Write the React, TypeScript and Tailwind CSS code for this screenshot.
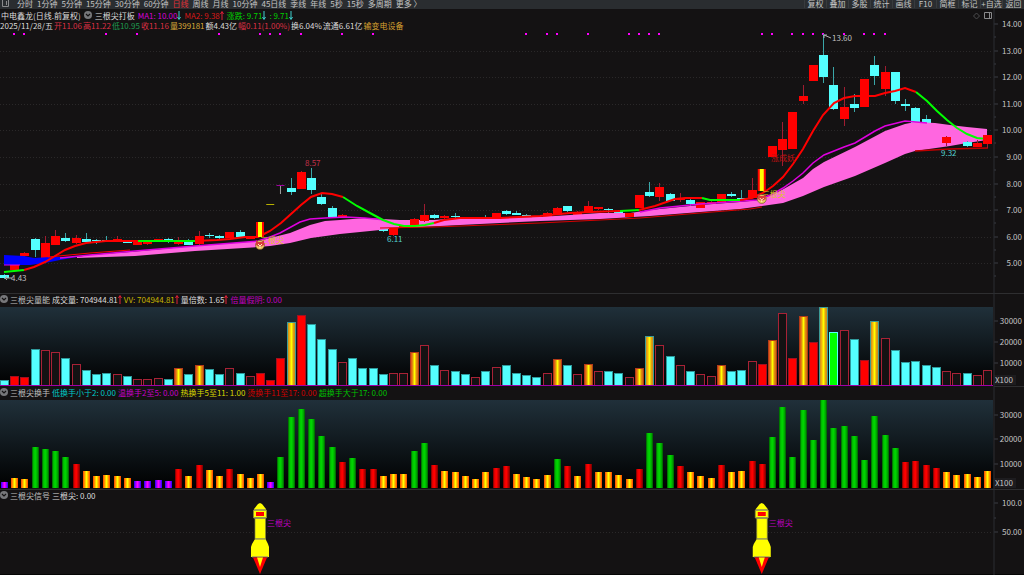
import type { ReactNode } from "react";
import clsx from "clsx";

const STEP = 10.24;
const PLOT_RIGHT = 993;
const cx = (i: number) => 4 + i * STEP;

const PERIODS = [
  "分时", "1分钟", "5分钟", "15分钟", "30分钟", "60分钟", "日线", "周线", "月线",
  "10分钟", "45日线", "季线", "年线", "5秒", "15秒", "多周期", "更多 〉",
];
const TOOLS = ["复权", "叠加", "多股", "统计", "画线", "F10", "简框", "标记", "+自选", "返回"];

// [index, kind, high, body top, body bottom, low]
type Candle = [number, "r" | "c", number, number, number, number];
const CANDLES: Candle[] = [
  [0, "c", 274, 275, 278, 279], [1, "r", 265, 265, 270, 270], [2, "r", 252, 253, 256, 257],
  [3, "c", 238, 239, 250, 257], [4, "r", 236, 243, 259, 259], [5, "r", 230, 236, 245, 245],
  [6, "c", 233, 238, 241, 242], [7, "r", 235, 238, 243, 244], [8, "c", 233, 239, 242, 242],
  [9, "c", 239, 240, 241, 244], [10, "c", 236, 240, 241, 241], [11, "r", 236, 239, 241, 241],
  [12, "c", 240, 241, 243, 243], [13, "r", 240, 241, 245, 245], [14, "r", 241, 242, 244, 245],
  [15, "r", 239, 239, 241, 242], [16, "c", 238, 239, 241, 243], [17, "r", 237, 240, 244, 245],
  [18, "c", 239, 241, 245, 245], [19, "r", 231, 236, 244, 245], [20, "c", 233, 235, 236, 238],
  [21, "c", 235, 236, 238, 239], [22, "r", 232, 232, 238, 238], [23, "c", 230, 232, 237, 237],
  [24, "r", 236, 236, 239, 239], [28, "c", 178, 188, 192, 195], [29, "r", 171, 172, 189, 189],
  [30, "c", 168, 178, 190, 194], [31, "c", 194, 197, 204, 205], [32, "c", 206, 208, 217, 217],
  [33, "r", 214, 215, 218, 218], [36, "c", 228, 228, 230, 230], [37, "c", 229, 229, 231, 232],
  [38, "r", 228, 228, 235, 236], [39, "r", 225, 225, 228, 228], [40, "r", 218, 219, 225, 226],
  [41, "r", 204, 215, 221, 222], [42, "c", 214, 215, 218, 219], [43, "r", 215, 216, 218, 219],
  [44, "c", 213, 216, 217, 219], [45, "c", 217, 217, 218, 218], [46, "r", 218, 218, 220, 220],
  [47, "c", 215, 217, 218, 218], [48, "r", 213, 213, 219, 219], [49, "c", 210, 211, 214, 215],
  [50, "c", 211, 213, 215, 215], [51, "c", 214, 215, 216, 217], [52, "c", 216, 217, 218, 218],
  [53, "r", 212, 213, 217, 217], [54, "r", 207, 208, 215, 215], [55, "c", 206, 206, 211, 212],
  [56, "r", 211, 212, 215, 215], [57, "r", 201, 206, 213, 213], [58, "r", 207, 207, 209, 210],
  [59, "c", 208, 209, 210, 213], [60, "c", 210, 211, 213, 213], [61, "r", 213, 213, 217, 217],
  [62, "r", 195, 195, 208, 208], [63, "c", 182, 192, 196, 197], [64, "r", 183, 187, 197, 201],
  [65, "c", 193, 194, 201, 201], [66, "r", 193, 198, 200, 202], [67, "c", 199, 200, 204, 206],
  [68, "r", 202, 202, 208, 208], [69, "r", 201, 202, 204, 204], [70, "r", 194, 194, 203, 203],
  [71, "c", 192, 194, 196, 197], [72, "c", 190, 198, 199, 199], [73, "r", 178, 190, 198, 198],
  [75, "r", 146, 146, 157, 157], [76, "r", 122, 139, 150, 166], [77, "r", 112, 112, 149, 149],
  [78, "r", 85, 96, 101, 104], [79, "r", 65, 65, 81, 81], [80, "c", 34, 55, 77, 83],
  [81, "c", 67, 85, 109, 110], [82, "r", 87, 107, 119, 126], [83, "c", 94, 104, 108, 112],
  [84, "r", 79, 79, 107, 107], [85, "c", 56, 65, 76, 85], [86, "r", 66, 72, 89, 96],
  [87, "c", 72, 72, 101, 104], [88, "c", 99, 104, 106, 111], [89, "c", 107, 108, 123, 123],
  [90, "c", 115, 119, 123, 123], [92, "r", 136, 137, 143, 146], [94, "c", 141, 142, 146, 147],
  [95, "r", 140, 143, 147, 147], [96, "r", 135, 135, 144, 148],
];
// candles that stay readable inside the band
const OVER_BAND = [18, 38, 39, 40, 41, 61, 68, 92, 94, 95, 96];

const DOTS = [
  1, 2, 10, 13, 21, 25, 26, 27, 29, 33, 36, 51, 53, 54, 57, 61, 62, 63, 64, 74, 75, 77, 78,
  79, 80, 82, 84, 85, 86,
];

const FAST_LINE = [
  ["#00ff00", "4,272 24,270"],
  ["#ff0000", "24,270 34,267 45,262 55,256 65,250 75,246 86,243 96,242 106,241 138,241"],
  ["#00ff00", "138,241 195,241"],
  ["#ff0000", "195,241 217,240 230,239 245,237 258,237 262,235 270,231 281,223 291,214 301,205 311,197 322,193 332,194 343,197"],
  ["#00ff00", "343,197 357,206 370,213 383,220 394,224 404,226 415,226 425,225 434,223"],
  ["#ff0000", "434,223 444,220 460,218 500,218 540,216 570,213 590,212 620,211"],
  ["#00ff00", "620,211 639,210"],
  ["#ff0000", "639,210 655,206 675,199 685,198 702,198"],
  ["#00ff00", "702,198 710,200 740,200"],
  ["#ff0000", "740,200 752,198 763,193 773,186 783,177 793,164 803,149 813,131 823,115 834,103 844,98 855,96 875,96 885,93 895,91 905,88 916,92"],
  ["#00ff00", "916,92 927,101 937,111 947,120 957,128 967,134 977,138 987,139"],
];

const BAND =
  "77,257 90,255 130,252 195,246 258,241 270,238 290,233 310,225 325,221 340,220 365,218 400,220 434,220 460,218 540,217 600,213 630,213 650,210 680,207 700,205 740,202 760,200 780,191 803,178 813,169 824,162 855,147 885,131 905,124 915,122 935,123 950,125 967,127 987,129 " +
  "987,140 967,143 950,146 915,151 905,154 885,163 855,176 824,187 803,196 783,203 762,206 740,209 700,212 650,216 600,219 540,221 440,226 400,228 370,231 340,234 311,238 290,243 270,246 258,247 195,251 135,256 77,258";

// daily volume, 24.4 per 10000 lots
const VOLUME = [
  6, 10, 9, 41, 39, 37, 31, 24, 17, 12, 13, 12, 10, 7, 7, 8, 7, 19, 12, 23, 18, 12, 19, 14,
  10, 14, 6, 31, 71, 79, 69, 52, 41, 26, 30, 19, 19, 12, 14, 14, 37, 45, 23, 17, 16, 12, 9,
  16, 20, 22, 14, 11, 9, 13, 29, 22, 12, 24, 16, 16, 13, 9, 19, 55, 45, 33, 22, 16, 12, 10,
  23, 16, 17, 27, 24, 51, 81, 31, 78, 48, 88, 60, 62, 52, 28, 72, 53, 40, 26, 27, 23, 20, 16,
  13, 14, 11, 17,
];
// C falling, H rising, R strong rise, Y / T doubled volume, G shrinking
const VOLUME_KIND =
  "CRRCHHCHCC" + "CHCHHHCYCY" + "CCHCHRRRTR" + "CCCHCCCCHH" + "YHCHCCHCHC" +
  "CCCHYCHYHC" + "CHYTHCHCHH" + "YCCHRYHRYR" + "TGHCRTHCCC" + "CCHHCHH";

const VOLUME_FILL: Record<string, string> = {
  C: "#54ffff", H: "#141213", R: "#ff0000", Y: "url(#gold)", T: "url(#goldCyan)", G: "#00ff00",
};
const VOLUME_EDGE: Record<string, string> = {
  C: "#2f9a9c", H: "#a82236", R: "#a01020", Y: "#b33a18", T: "#3c9a96", G: "#54ffff",
};

function turnoverFill(v: number) {
  if (v >= 28) return "url(#green)";
  if (v >= 19) return "url(#red)";
  if (v >= 9) return "url(#orange)";
  return "url(#violet)";
}

function Bands({ id, stops }: { id: string; stops: string[] }) {
  return (
    <linearGradient id={id}>
      {stops.map((color, i) => (
        <stop key={i} offset={i / (stops.length - 1)} stopColor={color} />
      ))}
    </linearGradient>
  );
}

function Panel({ top, height, label, legend, children }: {
  top: number;
  height: number;
  label: string;
  legend: ReactNode;
  children: ReactNode;
}) {
  return (
    <section className="relative">
      <svg viewBox={`0 ${top} 1024 ${height}`} className="block h-auto w-full" role="img" aria-label={label}>
        {children}
        <path d={`M994 ${top}V${top + height}`} stroke="#2b2d33" />
      </svg>
      <div className="absolute top-0 left-0 whitespace-nowrap">{legend}</div>
    </section>
  );
}

function AxisLabel({ y, text }: { y: number; text: string }) {
  return (
    <>
      <path d={`M994 ${y}h4`} stroke="#3b3d44" />
      <text x="1022" y={y + 3} fontSize="8" textAnchor="end" fill="#c4c4c4">{text}</text>
    </>
  );
}

function UnitLabel({ y }: { y: number }) {
  return (
    <>
      <rect x="994" y={y - 5} width="22" height="10" fill="#1d1c1f" />
      <text x="995" y={y + 3} fontSize="8" fill="#c4c4c4">X100</text>
    </>
  );
}

function Toggle() {
  return (
    <button aria-label="指标菜单" className="flex">
      <svg viewBox="0 0 8 8" className="size-2">
        <circle cx="4" cy="4" r="4" fill="#77777a" />
        <path d="M2 3l2 2 2-2" fill="none" stroke="#141213" strokeWidth="1.2" />
      </svg>
    </button>
  );
}

function Arrow({ down }: { down?: boolean }) {
  return (
    <svg viewBox="0 0 4 9" className={clsx("h-[9px] w-1", down ? "text-[#3fd0d0]" : "text-[#e02038]")}>
      <path
        d={down ? "M2 0V8M.5 6L2 8.5 3.5 6" : "M2 9V1M.5 3L2 .5 3.5 3"}
        fill="none"
        stroke="currentColor"
      />
    </svg>
  );
}

function Rocket({ i }: { i: number }) {
  return (
    <g transform={`translate(${cx(i)} 503)`}>
      <path d="M0 0L2 1 6 6V7H-6V6L-2 1Z" fill="#ffff00" />
      <path d="M-6.5 7H6.5V15H-6.5Z M-5 15H5.5V36H-5Z" fill="#ffff00" stroke="#8b8a3a" strokeWidth=".7" />
      <path d="M-5 36H5.5L8 41 9 44V54H-9V44L-8 41Z" fill="#ffff00" />
      <path d="M-4 9H4V13H-4Z" fill="#ff0000" />
      <path d="M-6 7H6M-6 15H6M-5 36H5.5M-8 54H8" stroke="#77777a" />
      <path d="M-7 54.500H7L0 71Z" fill="#ff0000" />
      <path d="M-3 54.500H3L0 64Z" fill="#ffff00" />
      <text x="7" y="23" fontSize="8" fill="#c000c0">三根尖</text>
    </g>
  );
}

function Signal({ i, top, bottom }: { i: number; top: number; bottom: number }) {
  const x = cx(i);
  const y = bottom + 8;
  return (
    <>
      <rect x={x - 4} y={top} width="8" height={bottom - top} fill="#ff0000" />
      <rect x={x - 2} y={top} width="4" height={bottom - top} fill="#ffff00" />
      <text x={x} y={y - 2} fontSize="8" fill="#d9c91c">三根尖</text>
      <circle cx={x} cy={y} r="4.500" fill="#e8c860" stroke="#6d4a1c" strokeWidth=".6" />
      <path d={`M${x - 4} ${y - 5}l2 2h4l2-2v5l-4 2-4-2z`} fill="#d83a3a" />
      <path d={`M${x - 2} ${y - 1}l2 2 2-2M${x} ${y + 1}v2`} stroke="#fff3c0" fill="none" />
    </>
  );
}

function CandleShape({ c: [i, kind, high, top, bottom, low] }: { c: Candle }) {
  const x = Math.round(cx(i));
  return (
    <>
      <path d={`M${x + 0.5} ${high}V${low}`} stroke={kind === "r" ? "#a01c30" : "#3aa6a8"} />
      <rect x={x - 4} y={top} width="9" height={bottom - top} fill={kind === "r" ? "#ff0000" : "#54ffff"} />
    </>
  );
}

function PricePanel() {
  return (
    <Panel
      top={9}
      height={284}
      label="日线"
      legend={
        <>
          <div className="flex h-3 items-center gap-[3px] pl-px">
            <h1>中电鑫龙(日线.前复权)</h1>
            <Toggle />
            <span>三根尖打板</span>
            <span className="flex text-[#d800d8]">MA1: 10.00<Arrow down /></span>
            <span className="flex text-[#d81818]">MA2: 9.38<Arrow /></span>
            <span className="flex text-[#00d000]">涨跌: 9.71<Arrow down /></span>
            <span className="flex text-[#00d000]">: 9.71<Arrow down /></span>
          </div>
          <div className="flex h-2 items-center gap-px">
            <span>2025/11/28/五</span>
            <span className="text-[#dc3044]">开11.06</span>
            <span className="text-[#dc3044]">高11.22</span>
            <span className="text-[#1f9a50]">低10.95</span>
            <span className="text-[#dc3044]">收11.16</span>
            <span className="text-[#d8a838]">量399181</span>
            <span>额4.43亿</span>
            <span className="text-[#dc3044]">幅0.11(1.00%)</span>
            <span>换6.04%</span>
            <span>流通6.61亿</span>
            <a href="#sector" className="text-[#d8a030]">输变电设备</a>
          </div>
        </>
      }
    >
      {[14, 13, 12, 11, 10, 9, 8, 7, 6, 5].map((price, i) => {
        const y = Math.round(24 + i * 26.6);
        return (
          <g key={price}>
            {i > 0 && <path d={`M0 ${y + 0.5}H${PLOT_RIGHT}`} stroke="#2a2829" strokeDasharray="1 2" />}
            <path d={`M994 ${y + 13}h2`} stroke="#3b3d44" />
            <AxisLabel y={y} text={price.toFixed(2)} />
          </g>
        );
      })}
      {DOTS.map((i) => (
        <rect key={i} x={Math.round(cx(i)) - 1} y="33" width="2" height="2" fill="#ff00ff" />
      ))}
      {CANDLES.map((c) => <CandleShape key={c[0]} c={c} />)}
      <polygon points="4,255 24,256 34,258 50,257 77,257 60,260 45,263 30,265 4,265" fill="#0000ff" />
      <polygon points={BAND} fill="#ff66e0" />
      {CANDLES.filter((c) => OVER_BAND.includes(c[0])).map((c) => <CandleShape key={c[0]} c={c} />)}
      <g fill="none">
        <polyline points="4,265 20,265" stroke="#e000e0" />
        <polyline points="48,257 90,253 130,250" stroke="#ff0000" />
        <polyline
          points="60,258 90,255 135,251 195,246 258,241 270,237 280,233 300,222 310,219 325,218 345,217 365,218 385,220"
          stroke="#e000e0"
          strokeWidth="1.500"
        />
        <polyline
          points="640,212 660,208 700,204 757,200 773,194 783,188 793,181 803,173 813,163 824,155 844,147 855,143 875,131 885,126 905,121 927,123"
          stroke="#e000e0"
          strokeWidth="1.500"
        />
        <polyline
          points="380,228 434,227 540,223 640,218 700,213 750,209 762,207"
          stroke="#d80000"
        />
        <polyline points="915,151 950,149 988,148" stroke="#c00000" strokeWidth="1.500" />
        {FAST_LINE.map(([color, points]) => (
          <polyline key={points} points={points} stroke={color} strokeWidth="2" />
        ))}
        <path d={`M${cx(26) - 4} 204.500h8`} stroke="#b8b000" />
        <path d={`M${cx(27)} 186v8`} stroke="#a0a0a0" />
        <path d={`M${cx(27) - 4} 185.500h8`} stroke="#a000a0" />
        <path d="M831 38l-7-3M824 38v-3h3M12 278H5M7 276l-2 2 2 2" stroke="#b0b0b0" />
      </g>
      <CandleShape c={CANDLES[CANDLES.length - 1]} />
      <Signal i={25} top={222} bottom={237} />
      <Signal i={74} top={169} bottom={191} />
      <g fontSize="8">
        <text x="305" y="166" fill="#c03048">8.57</text>
        <text x="387" y="242" fill="#54d0d0">6.11</text>
        <text x="941" y="156" fill="#54d0d0">9.32</text>
        <text x="832" y="41" fill="#c0c0c0">13.60</text>
        <text x="11" y="281" fill="#c0c0c0">4.43</text>
        <text x="771" y="161" fill="#c01010">涨成妖</text>
      </g>
      <path d="M976.500 13l3 3-3 3-3-3z" fill="none" stroke="#4c4c4e" />
      <path d="M984.500 12.500h7v6h-7z M989.500 13v5" fill="none" stroke="#8a8a8c" />
    </Panel>
  );
}

function VolumePanel() {
  return (
    <Panel
      top={293}
      height={94}
      label="三根尖量能"
      legend={
        <div className="flex h-3 items-center gap-[2px]">
          <Toggle />
          <h2 className="text-[#c0c0c0]">三根尖量能</h2>
          <span className="flex">成交量: 704944.81<Arrow /></span>
          <span className="flex text-[#c8b400]">VV: 704944.81<Arrow /></span>
          <span className="flex">量倍数: 1.65<Arrow /></span>
          <span className="text-[#c000c0]">倍量假阴: 0.00</span>
        </div>
      }
    >
      <path d="M0 293.500H1024" stroke="#2e2e30" />
      <rect y="307" width={PLOT_RIGHT} height="79" fill="url(#sky)" />
      {VOLUME.map((v, i) => {
        const h = Math.round((v * 78) / 88);
        const kind = VOLUME_KIND[i];
        return (
          <rect
            key={i}
            x={Math.round(cx(i)) - 3.5}
            y={385.5 - h}
            width="8"
            height={h}
            fill={VOLUME_FILL[kind]}
            stroke={VOLUME_EDGE[kind]}
          />
        );
      })}
      <path d={`M0 385.500H${PLOT_RIGHT}`} stroke="#a000a8" />
      <path d="M994 386.500H1024" stroke="#2e2e30" />
      <AxisLabel y={321} text="30000" />
      <AxisLabel y={342} text="20000" />
      <AxisLabel y={363} text="10000" />
      <UnitLabel y={380} />
    </Panel>
  );
}

function TurnoverPanel() {
  return (
    <Panel
      top={387}
      height={102}
      label="三根尖换手"
      legend={
        <div className="flex h-[10px] items-center gap-[2px]">
          <Toggle />
          <h2 className="text-[#c0c0c0]">三根尖换手</h2>
          <span className="text-[#00c8c8]">低换手小于2: 0.00</span>
          <span className="text-[#c800c8]">温换手2至5: 0.00</span>
          <span className="text-[#d8d800]">热换手5至11: 1.00</span>
          <span className="text-[#d00000]">烫换手11至17: 0.00</span>
          <span className="text-[#00c000]">超换手大于17: 0.00</span>
        </div>
      }
    >
      <rect y="400" width={PLOT_RIGHT} height="88" fill="url(#sky)" />
      {VOLUME.map((v, i) => (
        <rect key={i} x={Math.round(cx(i)) - 3} y={488 - v} width="7" height={v} fill={turnoverFill(v)} />
      ))}
      <AxisLabel y={415} text="30000" />
      <AxisLabel y={439} text="20000" />
      <AxisLabel y={464} text="10000" />
      <UnitLabel y={483} />
    </Panel>
  );
}

function SignalPanel() {
  return (
    <Panel
      top={489}
      height={86}
      label="三根尖信号"
      legend={
        <div className="flex h-3 items-center gap-[2px]">
          <Toggle />
          <h2 className="text-[#c0c0c0]">三根尖信号</h2>
          <span>三根尖: 0.00</span>
        </div>
      }
    >
      <path d="M0 489.500H1024" stroke="#2e2e30" />
      <path d={`M0 532.500H${PLOT_RIGHT}`} stroke="#2a2829" strokeDasharray="1 2" />
      <path d="M0 574.500H1024" stroke="#050505" />
      <Rocket i={25} />
      <Rocket i={74} />
      <AxisLabel y={503} text="100.0" />
      <path d="M994 518h2" stroke="#3b3d44" />
      <AxisLabel y={532} text="50.00" />
    </Panel>
  );
}

export default function App() {
  return (
    <main className="min-h-screen bg-[#141213] font-['Noto_Sans_CJK_SC',sans-serif] text-[8px] leading-[9px] text-[#dcdcdc]">
      <svg className="absolute size-0" aria-hidden="true">
        <defs>
          <linearGradient id="sky" x2="0" y2="1">
            <stop offset="0" stopColor="#20303a" />
            <stop offset="1" stopColor="#000000" />
          </linearGradient>
          <Bands id="gold" stops={["#e03020", "#e08a10", "#ffff00", "#e08a10", "#c06010"]} />
          <Bands id="goldCyan" stops={["#c08020", "#f0b010", "#ffff00", "#e0a010", "#c08020"]} />
          <Bands id="green" stops={["#005a00", "#00c800", "#00d400", "#00b000", "#005a00"]} />
          <Bands id="red" stops={["#700000", "#f00000", "#ff0000", "#c00000", "#700000"]} />
          <Bands id="orange" stops={["#ff3c00", "#ffa000", "#ffff00", "#ffa000", "#ff3c00"]} />
          <Bands id="violet" stops={["#2000ff", "#a000ff", "#ff00ff", "#a000ff", "#2000ff"]} />
        </defs>
      </svg>
      <nav className="flex h-[9px] justify-between bg-[#2a2d30] leading-[8px] whitespace-nowrap text-[#c4c4c4]">
        <div className="flex items-start gap-1 pl-[2px]">
          <button aria-label="侧栏" className="mr-1">
            <svg viewBox="0 0 7 7" className="size-[7px]" fill="none" stroke="#8a8a8c">
              <path d="M.5 0V6.500H6.500V0M4.500 1V5" />
            </svg>
          </button>
          {PERIODS.map((name) => (
            <button key={name} className={clsx(name === "日线" && "text-[#e03038]")}>{name}</button>
          ))}
        </div>
        <div className="flex items-start">
          {TOOLS.map((name) => (
            <button key={name} className="min-w-[22px] border-l border-[#383b3e] text-center">{name}</button>
          ))}
        </div>
      </nav>
      <PricePanel />
      <VolumePanel />
      <TurnoverPanel />
      <SignalPanel />
    </main>
  );
}
